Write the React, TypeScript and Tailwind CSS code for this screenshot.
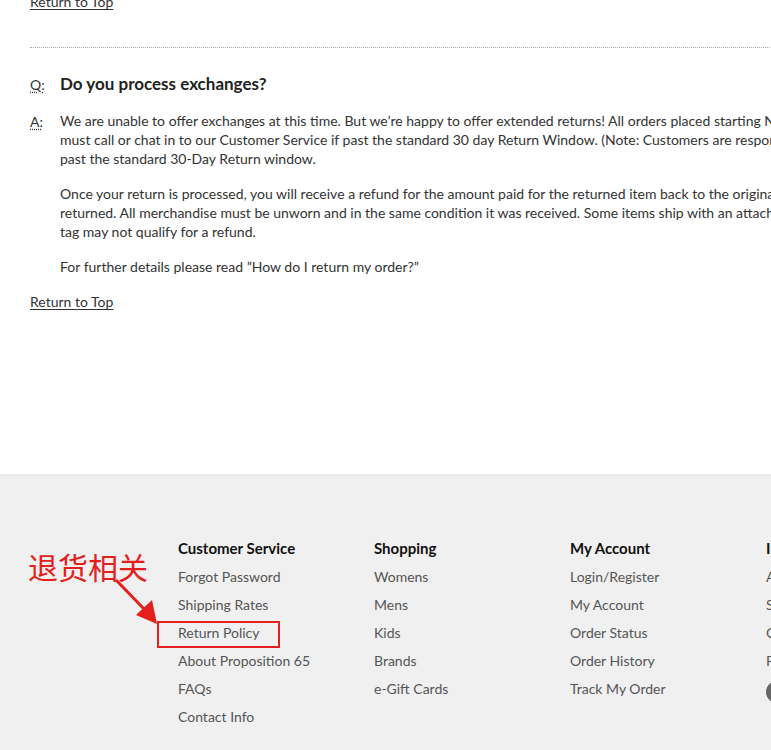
import React from 'react'

const columns = [
  {
    title: 'Customer Service',
    links: ['Forgot Password', 'Shipping Rates', 'Return Policy', 'About Proposition 65', 'FAQs', 'Contact Info'],
  },
  {
    title: 'Shopping',
    links: ['Womens', 'Mens', 'Kids', 'Brands', 'e-Gift Cards'],
  },
  {
    title: 'My Account',
    links: ['Login/Register', 'My Account', 'Order Status', 'Order History', 'Track My Order'],
  },
  {
    title: 'Information',
    links: ['About Us', 'Store Locations', 'Careers', 'Press'],
  },
]

function Label({ children }: { children: React.ReactNode }) {
  return (
    <span className="w-[30px] shrink-0 text-[14px] underline decoration-dotted underline-offset-2">
      {children}
    </span>
  )
}

export default function App() {
  return (
    <div
      className="relative w-full overflow-hidden bg-white text-[#333]"
      style={{ fontFamily: 'Lato, "Noto Sans", sans-serif' }}
    >
      <div className="w-[1400px]">
        {/* FAQ answer */}
        <div className="pl-[30px]">
          <a href="#" className="-mt-[8px] block text-[14px] leading-[19px] text-[#333] underline underline-offset-2">
            Return to Top
          </a>

          <div className="mt-[36px] border-t border-dotted border-[#aaa]" />

          <div className="mt-[25px] flex items-center">
            <Label>Q:</Label>
            <h3 className="text-[17px] font-bold leading-[22px] text-[#222]">Do you process exchanges?</h3>
          </div>

          <div className="mt-[16px] flex">
            <Label>A:</Label>
            <div className="whitespace-nowrap text-[14px] leading-[19px]">
              <p>
                We are unable to offer exchanges at this time. But we’re happy to offer extended returns! All orders placed starting November 1st may be returned through January 31st. Customers
                <br />
                must call or chat in to our Customer Service if past the standard 30 day Return Window. (Note: Customers are responsible for return shipping costs on items
                <br />
                past the standard 30-Day Return window.
              </p>
              <p className="mt-[16px]">
                Once your return is processed, you will receive a refund for the amount paid for the returned item back to the original form of payment within 7-10 business days of the item being
                <br />
                returned. All merchandise must be unworn and in the same condition it was received. Some items ship with an attached security tag. Items returned without the
                <br />
                tag may not qualify for a refund.
              </p>
              <p className="mt-[16px]">For further details please read ”How do I return my order?”</p>
            </div>
          </div>

          <a href="#" className="mt-[16px] inline-block text-[14px] leading-[19px] text-[#333] underline underline-offset-2">
            Return to Top
          </a>
        </div>

        {/* Footer */}
        <footer className="mt-[161px] h-[300px] border-t-[3px] border-[#ebebeb] bg-[#f0f0f0] pl-[178px] pt-[61px]">
          <div className="flex">
            {columns.map((col) => (
              <div key={col.title} className="w-[196px] shrink-0">
                <h4 className="text-[15px] font-bold leading-[20px] text-[#111]">{col.title}</h4>
                <ul className="mt-[9px] flex flex-col gap-[8px]">
                  {col.links.map((link) => (
                    <li key={link} className="text-[14px] leading-[20px] text-[#555]">
                      {link}
                    </li>
                  ))}
                  {col.title === 'Information' && (
                    <li className="mt-[2px] h-[22px] w-[22px] rounded-full bg-[#666]" />
                  )}
                </ul>
              </div>
            ))}
          </div>
        </footer>
      </div>

      {/* Annotation */}
      <div
        className="absolute left-[28px] top-[548px] text-[30px] leading-[36px] text-[#e3201c]"
        style={{ fontFamily: '"Noto Sans CJK SC", sans-serif' }}
      >
        退货相关
      </div>
      <svg className="absolute left-0 top-0" width="300" height="700" viewBox="0 0 300 700">
        <line x1="116" y1="580" x2="146" y2="611" stroke="#e3201c" strokeWidth="3" />
        <polygon points="157,624 136,615 152,600" fill="#e3201c" />
      </svg>
      <div className="absolute left-[157px] top-[621px] h-[27px] w-[123px] border-2 border-[#e3201c]" />
    </div>
  )
}
